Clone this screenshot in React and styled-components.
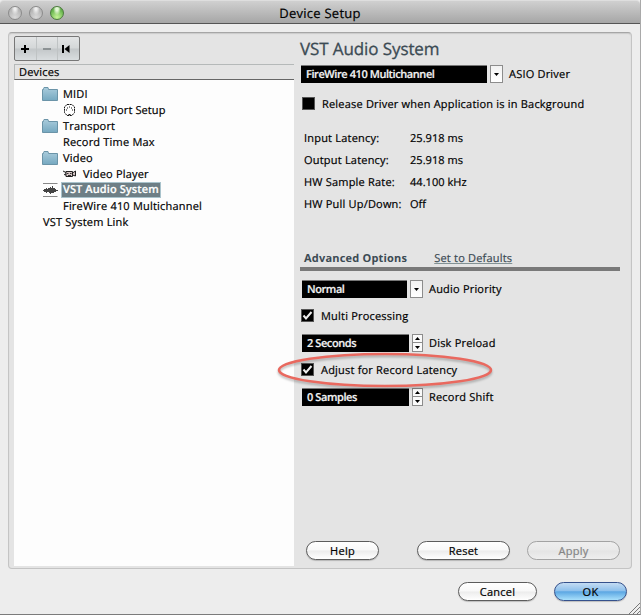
import React, { useState } from "react";
import styled, { createGlobalStyle, css } from "styled-components";

const GlobalStyle = createGlobalStyle`
  * {
    box-sizing: border-box;
  }

  body {
    margin: 0;
    overflow: hidden;
    background: #ededed;
    font-family: 'Open Sans', 'Noto Sans', sans-serif;
    font-size: 11px;
    color: #000;
    text-rendering: geometricPrecision;
  }
`;

const Window = styled.div`
  position: relative;
  display: flex;
  flex-direction: column;
  width: 641px;
  height: 615px;
  background: #ededed;
  border-right: 1px solid #a9a9a9;
  border-bottom: 1px solid #7b7b7b;
`;

const TitleBar = styled.header`
  display: grid;
  grid-template-columns: 80px 1fr 80px;
  align-items: center;
  height: 24px;
  padding-top: 2px;
  border-top: 1px solid #dedede;
  border-bottom: 1px solid #555;
  border-radius: 4px 4px 0 0;
  background: linear-gradient(#d0d0d0, #a6a6a6);
`;

const Lights = styled.div`
  display: flex;
  gap: 7px;
  padding-left: 8px;
`;

const Light = styled.span`
  width: 14px;
  height: 14px;
  border-radius: 50%;
  border: 1px solid ${(props) => (props.$on ? "#4c7b3d" : "#8b8b8b")};
  background: ${(props) =>
    props.$on
      ? "radial-gradient(ellipse at 50% 15%, #e4f8d6 0 15%, transparent 45%), radial-gradient(circle at 50% 85%, #c7f598, #69b64f 65%, #4c8a3c)"
      : "radial-gradient(ellipse at 50% 12%, #eee 0 12%, transparent 45%), radial-gradient(circle at 50% 85%, #d9d9d9, #b4b4b4 70%)"};
`;

const Text = styled.span`
  padding-top: 2px;
  white-space: nowrap;
  line-height: 14px;
  letter-spacing: ${(props) => props.$track ?? 0.2}px;
  -webkit-text-stroke: 0.2px currentColor;
`;

const Title = styled(Text)`
  padding-top: 0;
  line-height: 16px;
  text-align: center;
  font-size: 13px;
`;

const Panel = styled.main`
  display: flex;
  width: 624px;
  height: 537px;
  margin: 8px 0 0 8px;
  padding: 3px 0 2px 5px;
  border: 1px solid #c4c4c4;
  border-top: 1px solid #a6a6a6;
  border-radius: 4px;
  background: #e4e4e4;
  box-shadow: inset 0 1px 1px #cacaca;
`;

const Sidebar = styled.section`
  display: flex;
  flex-direction: column;
  width: 280px;
`;

const Toolbar = styled.div`
  display: flex;
  width: 66px;
  height: 25px;
  flex: none;
  border: 1px solid #777;
  border-radius: 2px;
  background: linear-gradient(#e3e5e6, #d4d7d8 48%, #c3c7c9 52%, #d9dddf);
`;

const Tool = styled.button`
  display: flex;
  align-items: center;
  justify-content: center;
  width: 21px;
  padding: 0 1px 0 0;
  border: none;
  background: none;

  & + & {
    border-left: 1px solid #bfc3c4;
  }

  &:last-child {
    padding-right: 4px;
  }
`;

const ListHeader = styled.div`
  display: flex;
  align-items: center;
  height: 16px;
  margin-top: 3px;
  padding-left: 4px;
  border: 1px solid #b5b9b9;
  border-right: none;
  border-bottom: 1px solid #666;
`;

const List = styled.ul`
  flex: 1;
  margin: 0;
  padding: 6px 0 0;
  list-style: none;
  background: #fdfdfd;
`;

const Row = styled.li`
  display: flex;
  align-items: center;
  height: 16px;
  padding-left: ${(props) => props.$indent}px;
`;

const RowLabel = styled(Text)`
  height: 16px;
  line-height: 17px;
  padding: 0 2px;

  ${(props) =>
    props.$selected &&
    css`
      height: 16px;
      line-height: 16px;
      margin-left: -1px;
      color: #fff;
      font-weight: 600;
      background: #6e7f86;
      outline: 1px solid #a9c3cc;
      outline-offset: -1px;
    `}
`;

const IconSlot = styled.span`
  display: flex;
  width: 19px;
  flex: none;
`;

const Settings = styled.section`
  display: flex;
  flex-direction: column;
  flex: 1;
  padding-left: 6px;
`;

const Heading = styled.h1`
  height: 26px;
  margin: 0 0 3px;
  font-size: 17px;
  line-height: 26px;
  font-weight: 400;
  letter-spacing: -0.1px;
  -webkit-text-stroke: 0.3px #3c4b54;
  color: #3c4b54;
`;

const Field = styled.div`
  display: flex;
  align-items: center;
  height: 18px;
  margin: 0 0 9px 2px;
`;

const DriverField = styled.div`
  margin: 0 0 3px -1px;
`;

const Value = styled.div`
  width: ${(props) => props.$width}px;
  height: 18px;
  padding-left: 5px;
  border-top: 1px solid #777;
  line-height: 17px;
  font-weight: 600;
  white-space: nowrap;
  letter-spacing: -0.42px;
  -webkit-text-stroke: 0.2px #f2f2f2;
  color: #f2f2f2;
  background: #000;
`;

const DropButton = styled.button`
  display: flex;
  align-items: center;
  justify-content: center;
  width: 13px;
  height: 18px;
  margin: 0 6px 0 3px;
  padding: 0;
  border: 1px solid #8c8c8c;
  background: linear-gradient(#f2f2f2, #fff);
`;

const Stepper = styled.div`
  display: grid;
  grid-template-rows: 9px 9px;
  width: 11px;
  margin: 0 6px 0 3px;
`;

const Step = styled.button`
  display: flex;
  align-items: center;
  justify-content: center;
  padding: 0;
  border: 1px solid #8c8c8c;
  background: #fafafa;

  & + & {
    border-top: none;
  }
`;

const CheckRow = styled.label`
  display: flex;
  align-items: center;
  gap: 7px;
  height: 18px;
  margin: 0 0 9px ${(props) => props.$inset ?? 1}px;
`;

const Box = styled.span`
  display: flex;
  align-items: center;
  justify-content: center;
  width: 13px;
  height: 13px;
  margin-bottom: 1px;
  border: 1px solid #555;
  background: #000;
`;

const HiddenInput = styled.input`
  display: none;
`;

const InfoTable = styled.dl`
  display: grid;
  grid-template-columns: 106px 1fr;
  grid-auto-rows: 22px;
  align-items: center;
  margin: 5px 0 0 4px;
`;

const Term = styled(Text).attrs({ as: "dt" })``;

const Detail = styled(Text).attrs({ as: "dd" })`
  margin: 0;
`;

const Advanced = styled.div`
  display: flex;
  justify-content: flex-start;
  gap: 27px;
  width: 320px;
  height: 21px;
  margin: 35px 0 9px;
  padding-left: 4px;
  border-bottom: 4px solid #797979;
  color: #3c4b54;
`;

const AdvancedTitle = styled(Text)`
  font-weight: 700;
  -webkit-text-stroke: 0;
`;

const DefaultsLink = styled(Text)`
  text-decoration: underline;
  text-decoration-color: #829294;
  text-underline-offset: 1px;
`;

const Actions = styled.div`
  display: flex;
  margin-top: auto;
  padding: 0 0 6px 6px;
`;

const Footer = styled.footer`
  display: flex;
  justify-content: flex-end;
  gap: 17px;
  padding: 13px 13px 0 0;
`;

const PushButton = styled.button`
  width: ${(props) => props.$width}px;
  height: 19px;
  margin-left: ${(props) => props.$left || 0}px;
  padding: 0;
  border: 1px solid #5c5c5c;
  border-radius: 10px;
  font: inherit;
  line-height: 15px;
  letter-spacing: 0.25px;
  -webkit-text-stroke: 0.2px currentColor;
  color: #000;
  background: linear-gradient(#fff, #f8f8f8 48%, #ececec 52%, #fff);
  box-shadow: 0 1px 1px rgba(0, 0, 0, 0.2);

  &:disabled {
    border-color: #a3a3a3;
    color: #858585;
    background: linear-gradient(#eee, #e9e9e9 48%, #e4e4e4 52%, #eee);
    box-shadow: none;
  }

  ${(props) =>
    props.$primary &&
    css`
      border-color: #35518c;
      background: linear-gradient(#c4dcf3, #8fc1ec 45%, #5ca7e3 52%, #a9e0fb);
    `}
`;

const Highlight = styled.svg`
  position: absolute;
  left: 274px;
  top: 348px;
  filter: drop-shadow(0 2px 1px rgba(0, 0, 0, 0.25));
  pointer-events: none;
`;

const Grip = styled.svg`
  position: absolute;
  right: 0;
  bottom: 0;
`;

const FolderIcon = () => (
  <svg width="16" height="14" viewBox="0 0 16 14">
    <defs>
      <linearGradient id="folder" x1="0" y1="0" x2="0" y2="1">
        <stop offset="0" stopColor="#aaccdc" />
        <stop offset="1" stopColor="#75a8c0" />
      </linearGradient>
    </defs>
    <path d="M0.5 13.5V2.5H1.5V1.5L2 0.5H6L6.5 2.5H15.5V13.5Z" fill="url(#folder)" stroke="#6b94a8" />
  </svg>
);

const MidiIcon = () => (
  <svg width="14" height="12" viewBox="0 0 14 12">
    <path d="M5 0.5H10L12.5 3V8.5L10 11.5H5L2.5 8.5V3Z" fill="#fff" stroke="#111" strokeDasharray="2 0.6" />
    <path d="M4 6h1M10 6h1M5 4h1M9 4h1M7 3h1M6.5 10.5h2" stroke="#111" />
  </svg>
);

const CameraIcon = () => (
  <svg width="15" height="8" viewBox="0 0 15 8">
    <path d="M1 1L4 2.5V5L2 4.5" fill="#eee" stroke="#222" />
    <path d="M4 1.5H10.5V6.5H4ZM10.5 3L13.5 1V6L10.5 5" fill="#d5c5c5" stroke="#222" />
    <path d="M5 3.5h1.5M8 3.5h1.5M6 5.5h3" stroke="#333" />
  </svg>
);

const WaveIcon = () => (
  <svg width="15" height="14" viewBox="0 0 15 14">
    <path d="M0 0.5H14.5M0 13.5H14.5" stroke="#888" />
    <path
      d="M0 7.5H15M1.5 6v3M2.5 6v3M3.5 5v5M4.5 6v3M5.5 5v4M6.5 5v5M7.5 4v7M8.5 5v5M9.5 3v7M10.5 5v5M11.5 5v4M12.5 6v3"
      stroke="#444"
    />
  </svg>
);

const Arrow = ({ up }) => (
  <svg width="5" height="3" viewBox="0 0 5 3">
    <path d={up ? "M0 3L2.5 0L5 3Z" : "M0 0L2.5 3L5 0Z"} />
  </svg>
);

const devices = [
  { name: "MIDI", indent: 28, icon: FolderIcon },
  { name: "MIDI Port Setup", indent: 48, icon: MidiIcon, track: 0.1 },
  { name: "Transport", indent: 28, icon: FolderIcon },
  { name: "Record Time Max", indent: 47 },
  { name: "Video", indent: 28, icon: FolderIcon },
  { name: "Video Player", indent: 48, icon: CameraIcon },
  { name: "VST Audio System", indent: 29, icon: WaveIcon, track: 0.1 },
  { name: "FireWire 410 Multichannel", indent: 47 },
  { name: "VST System Link", indent: 27 },
];

const info = [
  ["Input Latency:", "25.918 ms"],
  ["Output Latency:", "25.918 ms"],
  ["HW Sample Rate:", "44.100 kHz"],
  ["HW Pull Up/Down:", "Off"],
];

function Check({ label, initial, inset }) {
  const [checked, setChecked] = useState(initial);

  return (
    <CheckRow $inset={inset}>
      <HiddenInput type="checkbox" checked={checked} onChange={() => setChecked(!checked)} />
      <Box>
        {checked && (
          <svg width="11" height="11" viewBox="0 0 11 11">
            <path d="M1.5 5.5L4 8.5L9.5 2" fill="none" stroke="#eee" strokeWidth="2" />
          </svg>
        )}
      </Box>
      <Text>{label}</Text>
    </CheckRow>
  );
}

function Select({ value, label, width }) {
  return (
    <Field>
      <Value $width={width}>{value}</Value>
      <DropButton><Arrow /></DropButton>
      <Text>{label}</Text>
    </Field>
  );
}

function NumberField({ value, label }) {
  return (
    <Field>
      <Value $width={107}>{value}</Value>
      <Stepper>
        <Step><Arrow up /></Step>
        <Step><Arrow /></Step>
      </Stepper>
      <Text>{label}</Text>
    </Field>
  );
}

function App() {
  const [selected, setSelected] = useState("VST Audio System");

  return (
    <Window>
      <GlobalStyle />
      <TitleBar>
        <Lights>
          <Light />
          <Light />
          <Light $on />
        </Lights>
        <Title $track={0.25}>Device Setup</Title>
      </TitleBar>

      <Panel>
        <Sidebar>
          <Toolbar>
            <Tool>
              <svg width="8" height="8"><path d="M0 4H8M4 0V8" stroke="#000" strokeWidth="2" /></svg>
            </Tool>
            <Tool>
              <svg width="8" height="8"><path d="M0 4H8" stroke="#8c9294" strokeWidth="2" /></svg>
            </Tool>
            <Tool>
              <svg width="8" height="8"><path d="M0 0H2V8H0ZM7.5 0V8L2.5 4Z" /></svg>
            </Tool>
          </Toolbar>
          <ListHeader><Text>Devices</Text></ListHeader>
          <List>
            {devices.map(({ name, indent, icon: Icon, track }) => (
              <Row key={name} $indent={indent} onClick={() => setSelected(name)}>
                {Icon && <IconSlot><Icon /></IconSlot>}
                <RowLabel $track={track} $selected={name === selected}>{name}</RowLabel>
              </Row>
            ))}
          </List>
        </Sidebar>

        <Settings>
          <Heading>VST Audio System</Heading>
          <DriverField>
            <Select value="FireWire 410 Multichannel" label="ASIO Driver" width={186} />
          </DriverField>
          <Check label="Release Driver when Application is in Background" initial={false} inset={2} />
          <InfoTable>
            {info.map(([term, detail]) => (
              <React.Fragment key={term}>
                <Term>{term}</Term>
                <Detail $track={0.05}>{detail}</Detail>
              </React.Fragment>
            ))}
          </InfoTable>
          <Advanced>
            <AdvancedTitle>Advanced Options</AdvancedTitle>
            <DefaultsLink>Set to Defaults</DefaultsLink>
          </Advanced>
          <Select value="Normal" label="Audio Priority" width={105} />
          <Check label="Multi Processing" initial />
          <NumberField value="2 Seconds" label="Disk Preload" />
          <Check label="Adjust for Record Latency" initial />
          <NumberField value="0 Samples" label="Record Shift" />
          <Actions>
            <PushButton $width={73}>Help</PushButton>
            <PushButton $width={93} $left={38}>Reset</PushButton>
            <PushButton $width={93} $left={17} disabled>Apply</PushButton>
          </Actions>
        </Settings>
      </Panel>

      <Footer>
        <PushButton $width={79}>Cancel</PushButton>
        <PushButton $width={73} $primary>OK</PushButton>
      </Footer>

      <Highlight width="222" height="46" viewBox="0 0 222 46">
        <ellipse cx="111" cy="22" rx="106" ry="16" fill="none" stroke="#e9695f" strokeWidth="2.6" />
      </Highlight>
      <Grip width="12" height="12" viewBox="0 0 12 12">
        <path d="M1 12L12 1M5 12L12 5M9 12L12 9" stroke="#777" fill="none" />
      </Grip>
    </Window>
  );
}

export default App;
